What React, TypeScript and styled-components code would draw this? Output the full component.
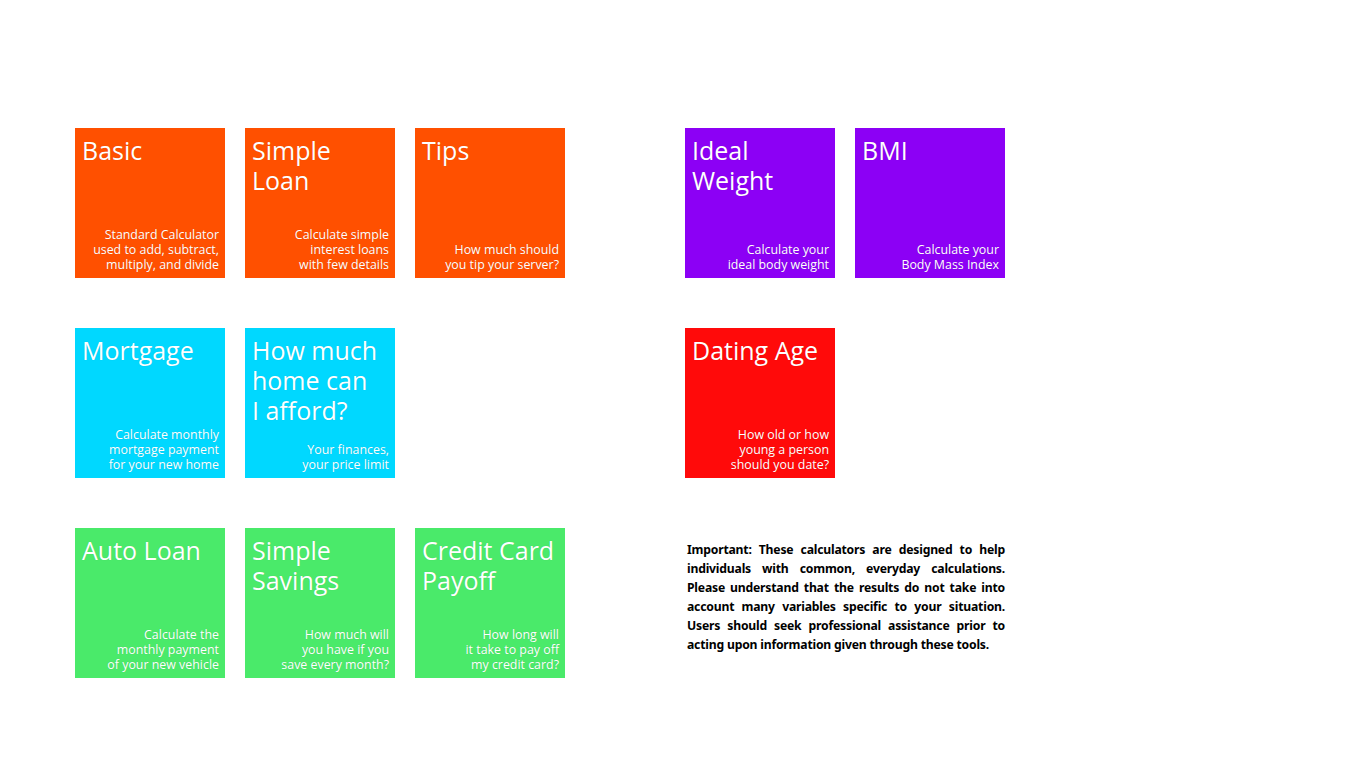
import { Fragment } from 'react'
import styled, { createGlobalStyle } from 'styled-components'

const GlobalStyle = createGlobalStyle`
  body {
    margin: 0;
    background: #ffffff;
    font-family: 'Open Sans', 'Noto Sans', sans-serif;
  }
`

const Page = styled.div`
  display: flex;
  gap: 120px;
  padding: 128px 0 0 75px;
  width: 1366px;
  height: 768px;
  box-sizing: border-box;
`

const Group = styled.div<{ $cols: number }>`
  display: grid;
  grid-template-columns: repeat(${(p) => p.$cols}, 150px);
  grid-auto-rows: 150px;
  column-gap: 20px;
  row-gap: 50px;
`

const TileBox = styled.div<{ $bg: string }>`
  display: flex;
  flex-direction: column;
  justify-content: space-between;
  background: ${(p) => p.$bg};
  color: #ffffff;
  padding: 7px 6px 6px 7px;
  box-sizing: border-box;
  text-shadow: 0 0 1px rgba(0, 0, 0, 0.15);
  cursor: pointer;
`

const Title = styled.div`
  font-size: 25px;
  line-height: 30px;
  font-weight: 400;
`

const Desc = styled.div`
  font-size: 12.4px;
  line-height: 15px;
  text-align: right;
`

const Gap = styled.div``

const Disclaimer = styled.p`
  grid-column: span 2;
  margin: 12px 0 0 2px;
  font-family: 'Noto Sans', sans-serif;
  font-weight: 700;
  font-size: 12.2px;
  line-height: 19px;
  color: #000000;
  text-align: justify;
  letter-spacing: -0.2px;
`

const ORANGE = '#ff5000'
const CYAN = '#00d8ff'
const GREEN = '#4aea6a'
const PURPLE = '#8c00f5'
const RED = '#ff0a0a'

type TileProps = { bg: string; title: string[]; desc: string[] }

function Lines({ lines }: { lines: string[] }) {
  return (
    <>
      {lines.map((l, i) => (
        <Fragment key={l}>
          {i > 0 && <br />}
          {l}
        </Fragment>
      ))}
    </>
  )
}

function Tile({ bg, title, desc }: TileProps) {
  return (
    <TileBox $bg={bg}>
      <Title>
        <Lines lines={title} />
      </Title>
      <Desc>
        <Lines lines={desc} />
      </Desc>
    </TileBox>
  )
}

export default function App() {
  return (
    <Page>
      <GlobalStyle />
      <Group $cols={3}>
        <Tile bg={ORANGE} title={['Basic']} desc={['Standard Calculator', 'used to add, subtract,', 'multiply, and divide']} />
        <Tile bg={ORANGE} title={['Simple', 'Loan']} desc={['Calculate simple', 'interest loans', 'with few details']} />
        <Tile bg={ORANGE} title={['Tips']} desc={['How much should', 'you tip your server?']} />
        <Tile bg={CYAN} title={['Mortgage']} desc={['Calculate monthly', 'mortgage payment', 'for your new home']} />
        <Tile bg={CYAN} title={['How much', 'home can', 'I afford?']} desc={['Your finances,', 'your price limit']} />
        <Gap />
        <Tile bg={GREEN} title={['Auto Loan']} desc={['Calculate the', 'monthly payment', 'of your new vehicle']} />
        <Tile bg={GREEN} title={['Simple', 'Savings']} desc={['How much will', 'you have if you', 'save every month?']} />
        <Tile bg={GREEN} title={['Credit Card', 'Payoff']} desc={['How long will', 'it take to pay off', 'my credit card?']} />
      </Group>
      <Group $cols={2}>
        <Tile bg={PURPLE} title={['Ideal', 'Weight']} desc={['Calculate your', 'ideal body weight']} />
        <Tile bg={PURPLE} title={['BMI']} desc={['Calculate your', 'Body Mass Index']} />
        <Tile bg={RED} title={['Dating Age']} desc={['How old or how', 'young a person', 'should you date?']} />
        <Gap />
        <Disclaimer>
          Important: These calculators are designed to help individuals with common, everyday calculations.
          Please understand that the results do not take into account many variables specific to your
          situation. Users should seek professional assistance prior to acting upon information given
          through these tools.
        </Disclaimer>
      </Group>
    </Page>
  )
}
